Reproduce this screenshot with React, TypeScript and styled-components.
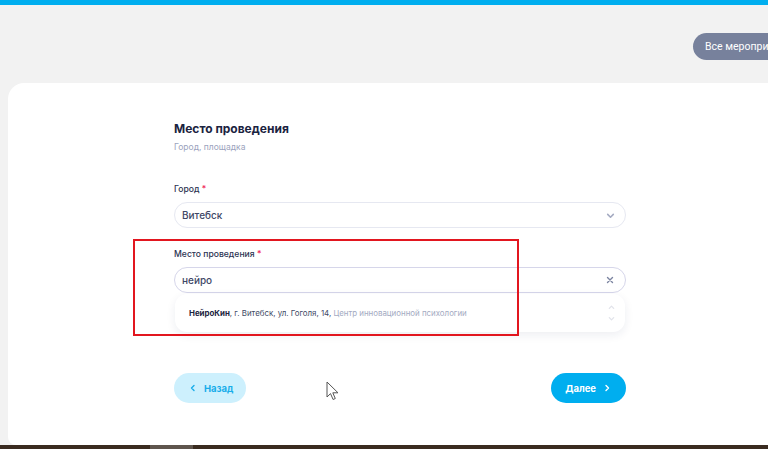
import React from 'react'
import styled, { createGlobalStyle } from 'styled-components'

const Global = createGlobalStyle`
  html, body {
    margin: 0;
    padding: 0;
    background: #f2f2f2;
    overflow: hidden;
  }
  body {
    font-family: Inter, 'Noto Sans', sans-serif;
  }
`

const Page = styled.div`
  width: 768px;
  height: 449px;
  display: flex;
  flex-direction: column;
  overflow: hidden;
`

const TopBar = styled.div`
  height: 5px;
  background: #00aeef;
  flex-shrink: 0;
`

const Header = styled.div`
  height: 78px;
  display: flex;
  padding: 28px 0 0 693px;
  box-sizing: border-box;
  flex-shrink: 0;
`

const AllEvents = styled.div`
  flex: 0 0 120px;
  height: 27px;
  padding: 0 12px;
  box-sizing: border-box;
  border-radius: 14px;
  background: #77819c;
  color: #fff;
  font-family: Roboto, 'Liberation Sans', sans-serif;
  font-size: 10.5px;
  line-height: 27px;
  white-space: nowrap;
`

const Card = styled.div`
  position: relative;
  margin-left: 8px;
  height: 362px;
  background: #fff;
  border-radius: 16px 0 0 8px;
  flex-shrink: 0;
  padding: 37px 0 0 166px;
  box-sizing: border-box;
`

const Form = styled.div`
  width: 452px;
  display: flex;
  flex-direction: column;
`

const Title = styled.h2`
  margin: 0;
  font-size: 12px;
  line-height: 18px;
  font-weight: 700;
  color: #1b2340;
`

const Subtitle = styled.div`
  margin-top: 2px;
  font-size: 8.5px;
  line-height: 14px;
  color: #9ba3bd;
`

const Label = styled.div<{ $top: number }>`
  margin-top: ${(p) => p.$top}px;
  font-size: 8.6px;
  line-height: 14px;
  font-weight: 500;
  color: #2b3352;

  span {
    color: #f0265a;
  }
`

const Field = styled.div<{ $active?: boolean }>`
  position: relative;
  margin-top: 6px;
  height: 26px;
  border-radius: 13px;
  border: 1px solid ${(p) => (p.$active ? '#d6d6ea' : '#e6e8f1')};
  box-sizing: border-box;
  display: flex;
  align-items: center;
  padding: 0 10px 0 7px;
  font-size: 10px;
  font-weight: 500;
  color: #3e4766;
`

const FieldText = styled.div`
  flex: 1;
`

const Menu = styled.div`
  position: absolute;
  left: 0;
  right: 0;
  top: 26px;
  height: 38px;
  background: #fff;
  border-radius: 12px;
  box-shadow: 0 3px 10px rgba(30, 40, 90, 0.08);
  display: flex;
  align-items: center;
  padding: 0 10px 0 14px;
  z-index: 2;
  font-size: 7.9px;
  font-weight: 400;
  color: #414a66;

  b {
    color: #1b2340;
    font-weight: 700;
  }

  em {
    font-style: normal;
    color: #a3aac2;
  }
`

const Buttons = styled.div`
  margin-top: 80px;
  display: flex;
  justify-content: space-between;
`

const Btn = styled.button<{ $primary?: boolean }>`
  height: 30px;
  border: none;
  border-radius: 15px;
  padding: ${(p) => (p.$primary ? '0 15px 0 14px' : '0 13px 0 15px')};
  display: flex;
  align-items: center;
  gap: 7px;
  font-family: Inter, sans-serif;
  font-size: 9.5px;
  font-weight: 700;
  background: ${(p) => (p.$primary ? '#00aeef' : '#cdf0fd')};
  color: ${(p) => (p.$primary ? '#fff' : '#19adea')};

  svg {
    flex-shrink: 0;
  }
`

const Highlight = styled.div`
  position: absolute;
  left: 125px;
  top: 156px;
  width: 386px;
  height: 97px;
  border: 2px solid #e2161f;
  box-sizing: border-box;
  pointer-events: none;
  z-index: 3;
`

const Cursor = styled.svg`
  position: absolute;
  left: 318px;
  top: 298px;
  z-index: 4;
`

const BottomBar = styled.div`
  flex: 1;
  background: #3a2b20;
  display: flex;
`

const BarThumb = styled.div`
  margin-left: 150px;
  width: 43px;
  background: #5f554d;
`

const Scroll = styled.div`
  display: flex;
  flex-direction: column;
  gap: 4px;
  opacity: 0.5;
`

const Chevron = ({ dir, color, size = 8 }: { dir: 'l' | 'r' | 'd' | 'u'; color: string; size?: number }) => {
  const d = {
    l: 'M5 1.5 2.5 4 5 6.5',
    r: 'M3 1.5 5.5 4 3 6.5',
    d: 'M1.5 3 4 5.5 6.5 3',
    u: 'M1.5 5 4 2.5 6.5 5',
  }[dir]
  return (
    <svg width={size} height={size} viewBox="0 0 8 8" fill="none">
      <path d={d} stroke={color} strokeWidth="1.4" strokeLinecap="round" strokeLinejoin="round" />
    </svg>
  )
}

export default function App() {
  return (
    <Page>
      <Global />
      <TopBar />
      <Header>
        <AllEvents>Все мероприятия</AllEvents>
      </Header>
      <Card>
        <Form>
          <Title>Место проведения</Title>
          <Subtitle>Город, площадка</Subtitle>

          <Label $top={28}>
            Город <span>*</span>
          </Label>
          <Field>
            <FieldText>Витебск</FieldText>
            <Chevron dir="d" color="#a5abc2" size={9} />
          </Field>

          <Label $top={19}>
            Место проведения <span>*</span>
          </Label>
          <Field $active>
            <FieldText>нейро</FieldText>
            <svg width="10" height="10" viewBox="0 0 10 10">
              <path d="M2.5 2.5 7.5 7.5M7.5 2.5 2.5 7.5" stroke="#7b84a0" strokeWidth="1.4" strokeLinecap="round" />
            </svg>
            <Menu>
              <FieldText>
                <b>НейроКин</b>, г. Витебск, ул. Гоголя, 14, <em>Центр инновационной психологии</em>
              </FieldText>
              <Scroll>
                <Chevron dir="u" color="#c3c7d6" size={7} />
                <Chevron dir="d" color="#c3c7d6" size={7} />
              </Scroll>
            </Menu>
          </Field>

          <Buttons>
            <Btn>
              <Chevron dir="l" color="#19adea" />
              Назад
            </Btn>
            <Btn $primary>
              Далее
              <Chevron dir="r" color="#fff" />
            </Btn>
          </Buttons>
        </Form>

        <Highlight />
        <Cursor width="13" height="20" viewBox="0 0 13 20">
          <path d="M1 1v15l3.5-3.4 2.6 5.9 2.2-1-2.5-5.7H12z" fill="#fff" stroke="#555" strokeWidth="1" strokeLinejoin="round" />
        </Cursor>
      </Card>
      <BottomBar>
        <BarThumb />
      </BottomBar>
    </Page>
  )
}
